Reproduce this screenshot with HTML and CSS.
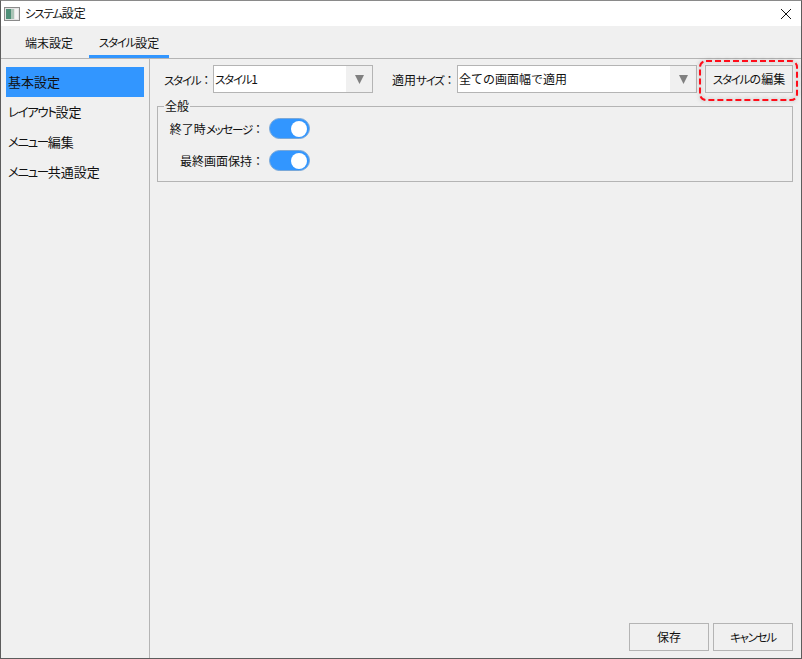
FILE: index.html
```html
<!DOCTYPE html>
<html lang="ja">
<head>
<meta charset="utf-8">
<title>システム設定</title>
<link rel="stylesheet" href="styles.css">
</head>
<body>
<div class="window">
  <header class="titlebar">
    <svg class="app-icon" width="16" height="14" viewBox="0 0 16 14">
      <rect x="0.5" y="0.5" width="15" height="13" fill="#e4e4e4" stroke="#8a8a8a"/>
      <rect x="2" y="2" width="5" height="10" fill="#4f8f78"/>
      <rect x="7" y="2" width="3" height="10" fill="#a9c4b6"/>
      <rect x="11" y="2" width="3" height="10" fill="#f4f4f4"/>
    </svg>
    <span class="title"><span class="k">システム</span>設定</span>
    <svg class="close" width="12" height="12" viewBox="0 0 12 12">
      <path d="M1 1 L11 11 M11 1 L1 11" stroke="#111" stroke-width="1" fill="none"/>
    </svg>
  </header>
  <nav class="tabs">
    <span class="tab">端末設定</span>
    <span class="tab tab-active"><span class="k">スタイル</span>設定</span>
  </nav>
  <div class="body">
    <aside class="sidebar">
      <div class="side-item side-active"><span>基本設定</span></div>
      <div class="side-item"><span><span class="k">レイアウト</span>設定</span></div>
      <div class="side-item"><span><span class="k">メニュー</span>編集</span></div>
      <div class="side-item"><span><span class="k">メニュー</span>共通設定</span></div>
    </aside>
    <main class="main">
      <div class="toprow">
        <span class="label first-label"><span class="k">スタイル</span><span class="c">：</span></span>
        <div class="select select-style">
          <span class="select-text"><span class="k">スタイル</span>1</span>
          <span class="select-arrow"><svg width="9" height="9" viewBox="0 0 9 9"><path d="M0 0 H9 L4.5 9 Z" fill="#808080"/></svg></span>
        </div>
        <span class="label second-label">適用<span class="k">サイズ</span><span class="c">：</span></span>
        <div class="select select-size">
          <span class="select-text">全ての画面幅で適用</span>
          <span class="select-arrow"><svg width="9" height="9" viewBox="0 0 9 9"><path d="M0 0 H9 L4.5 9 Z" fill="#808080"/></svg></span>
        </div>
        <button class="btn btn-edit"><span class="k">スタイル</span>の編集</button>
      </div>
      <fieldset class="group">
        <legend class="legend">全般</legend>
        <div class="row">
          <span class="row-label">終了時<span class="k">メッセージ</span><span class="c">：</span></span>
          <span class="toggle"><span class="knob"></span></span>
        </div>
        <div class="row">
          <span class="row-label">最終画面保持<span class="c">：</span></span>
          <span class="toggle"><span class="knob"></span></span>
        </div>
      </fieldset>
      <div class="footer">
        <button class="btn btn-foot">保存</button>
        <button class="btn btn-foot"><span class="k">キャンセル</span></button>
      </div>
    </main>
  </div>
  <svg class="highlight" width="99" height="41" viewBox="0 0 99 41">
    <rect class="highlight-rect" x="1" y="1" width="97" height="39" rx="6" ry="6"/>
  </svg>
</div>
</body>
</html>
```
FILE: styles.css
```css
* { box-sizing: border-box; }
html, body { margin: 0; padding: 0; }
body {
  width: 802px;
  height: 659px;
  overflow: hidden;
  background: #f0f0f0;
  font-family: "Noto Sans CJK JP", "Noto Sans", sans-serif;
  font-size: 12px;
  color: #111;
}
.k {
  font-feature-settings: "palt";
  font-size: 0.96em;
  letter-spacing: -0.11em;
}
.c { font-feature-settings: normal; }
.window {
  position: relative;
  width: 802px;
  height: 659px;
  display: flex;
  flex-direction: column;
  border: 1px solid #5c5c5c;
  border-top: 1px solid #8a8a8a;
  background: #f0f0f0;
}
.titlebar {
  height: 25px;
  background: #fff;
  display: flex;
  align-items: center;
  padding: 0 9px 0 3px;
  flex: none;
}
.app-icon { flex: none; }
.title { margin-left: 5px; font-size: 12px; flex: 1; padding-bottom: 2px; }
.close { flex: none; }
.tabs {
  height: 33px;
  flex: none;
  display: flex;
  gap: 6px;
  padding-left: 14px;
  border-bottom: 1px solid #b4b4b4;
}
.tab {
  width: 68px;
  height: 32px;
  display: flex;
  align-items: center;
  justify-content: center;
  font-size: 12px;
  padding-top: 3px;
  border-bottom: 3px solid transparent;
}
.tab-active {
  width: 80px;
  border-bottom-color: #3296ff;
}
.body { flex: 1; display: flex; min-height: 0; }
.sidebar {
  width: 149px;
  flex: none;
  border-right: 1px solid #b4b4b4;
  padding: 8px 5px 0 5px;
}
.side-item {
  height: 30px;
  display: flex;
  align-items: center;
  padding-left: 2px;
  padding-bottom: 2px;
  font-size: 13px;
}
.side-active { background: #3296ff; }
.main {
  flex: 1;
  display: flex;
  flex-direction: column;
  padding: 6px 8px 7px 7px;
  min-width: 0;
}
.toprow { display: flex; align-items: center; height: 28px; flex: none; }
.label { font-size: 12px; white-space: nowrap; }
.first-label { margin-left: 7px; width: 49px; }
.second-label { margin-left: 19px; width: 65px; }
.select {
  height: 28px;
  background: #fff;
  border: 1px solid #b4b4b4;
  display: flex;
  align-items: center;
  flex: none;
}
.select-style { width: 160px; }
.select-size { width: 240px; }
.select-text { flex: 1; padding-left: 1px; padding-bottom: 1px; font-size: 12px; }
.select-arrow {
  width: 26px;
  height: 100%;
  background: #f0f0f0;
  display: flex;
  align-items: center;
  justify-content: center;
}
.btn {
  font-family: inherit;
  font-size: 12px;
  color: #111;
  background: #f0f0f0;
  border: 1px solid #b4b4b4;
  padding: 0 0 1px 0;
}
.btn-edit { width: 88px; height: 28px; margin-left: 8px; flex: none; }
.group {
  margin: 7px 0 0 0;
  padding: 6px 0 0 0;
  height: 82px;
  border: 1px solid #b4b4b4;
  flex: none;
  display: flex;
  flex-direction: column;
  gap: 11px;
  min-width: 0;
}
.legend { margin-left: 6px; padding: 0 1px; font-size: 12px; line-height: 12px; }
.row { display: flex; align-items: center; height: 21px; }
.row-label { width: 106px; text-align: right; font-size: 12px; white-space: nowrap; padding-bottom: 1px; }
.toggle {
  width: 41px;
  height: 21px;
  margin-left: 5px;
  border-radius: 11px;
  background: #3296ff;
  border: 1px solid #7aa8d8;
  display: flex;
  align-items: center;
  justify-content: flex-end;
  padding-right: 2px;
}
.knob { width: 16px; height: 16px; border-radius: 50%; background: #fff; }
.footer {
  margin-top: auto;
  display: flex;
  justify-content: flex-end;
  gap: 4px;
}
.btn-foot { width: 80px; height: 28px; }
.highlight {
  position: absolute;
  left: 698px;
  top: 59px;
  filter: drop-shadow(0 0 2px rgba(0,0,0,.28));
}
.highlight-rect {
  fill: none;
  stroke: #ff0d1a;
  stroke-width: 2;
  stroke-dasharray: 6 3;
}
```
